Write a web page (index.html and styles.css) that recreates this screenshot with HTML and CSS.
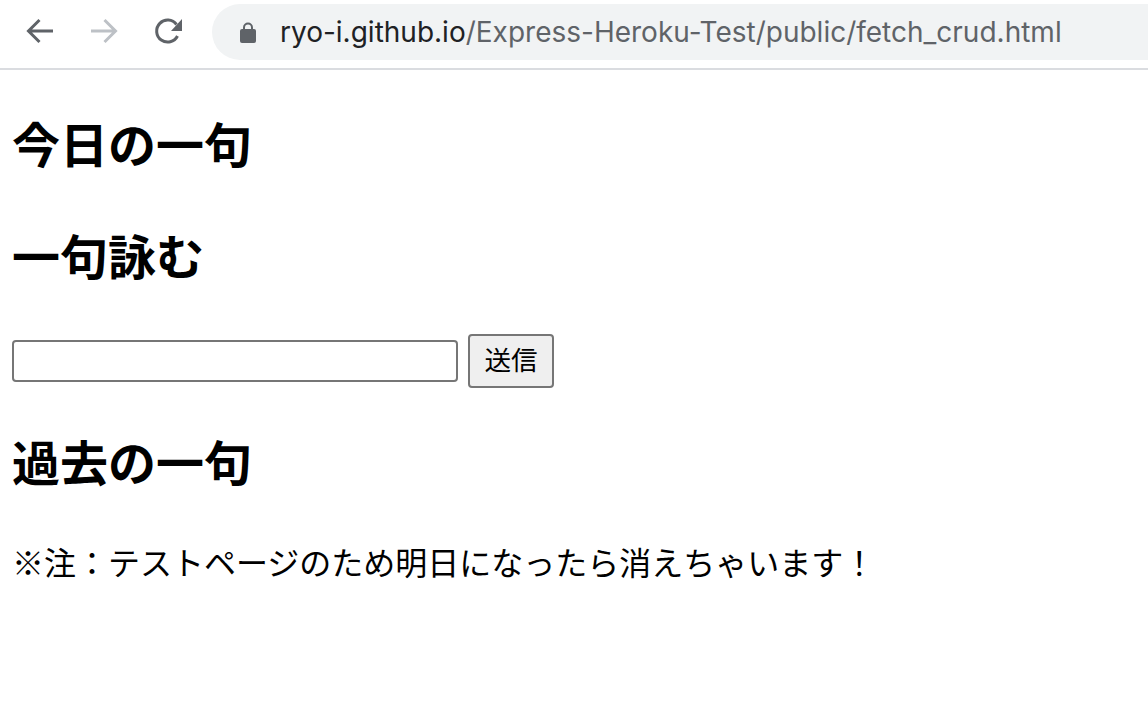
FILE: index.html
```html
<!DOCTYPE html>
<html lang="ja">
<head>
  <meta charset="utf-8">
  <title>fetch_crud</title>
  <link rel="stylesheet" href="styles.css">
</head>
<body>
  <div class="toolbar">
    <svg class="nav-icon" viewBox="0 0 32 32"><path d="M29 15H5M15.500 4 4.500 15 15.500 26" fill="none" stroke="#5f6368" stroke-width="3"/></svg>
    <svg class="nav-icon" viewBox="0 0 32 32"><path d="M3 15H27M16.500 4 27.500 15 16.500 26" fill="none" stroke="#bdc1c6" stroke-width="3"/></svg>
    <svg class="nav-icon" viewBox="0 0 32 32"><path d="M25.500 20A11 11 0 1 1 24.500 8.500" fill="none" stroke="#5f6368" stroke-width="3"/><path d="M30 3V15H19Z" fill="#5f6368"/></svg>
    <div class="omnibox">
      <svg class="lock" viewBox="0 0 16 22"><path d="M4 9V6.500a4 4 0 0 1 8 0V9" fill="none" stroke="#5f6368" stroke-width="2"/><rect x="0" y="8" width="16" height="14" rx="2" fill="#5f6368"/></svg>
      <span class="url"><span class="host">ryo-i.github.io</span>/Express-Heroku-Test/public/fetch_crud.html</span>
    </div>
  </div>

  <div class="content">
    <h2>今日の一句</h2>
    <h2>一句詠む</h2>
    <form class="haiku-form">
      <input type="text" class="haiku-input">
      <button type="button" class="send">送信</button>
    </form>
    <h2>過去の一句</h2>
    <p class="note">※注：テストページのため明日になったら消えちゃいます！</p>
  </div>
</body>
</html>
```

FILE: styles.css
```css
html, body {
  height: 100%;
}
body {
  margin: 0;
  background-color: #fff;
  color: #000;
  font-family: "Liberation Sans", "Noto Sans CJK JP", sans-serif;
  overflow: hidden;
}
.toolbar {
  display: flex;
  align-items: center;
  height: 68px;
  padding-left: 24px;
  border-bottom: 2px solid #dadce0;
  overflow: hidden;
}
.nav-icon {
  flex: none;
  width: 32px;
  height: 32px;
  margin-top: -4px;
  margin-right: 32px;
}
.nav-icon:nth-child(3) {
  margin-right: 28px;
}
.omnibox {
  flex: none;
  display: flex;
  align-items: center;
  width: 1000px;
  height: 56px;
  margin-top: -4px;
  padding-left: 28px;
  border-radius: 28px;
  background-color: #f1f3f4;
}
.lock {
  width: 16px;
  height: 22px;
  margin-right: 24px;
}
.url {
  font-family: Inter, "Liberation Sans", sans-serif;
  font-size: 28px;
  color: #5f6368;
  white-space: nowrap;
}
.host {
  color: #202124;
}
.content {
  padding: 49px 12px 0;
}
h2 {
  margin: 0 0 56px;
  font-size: 48px;
  line-height: 56px;
  font-weight: bold;
}
.haiku-form {
  display: flex;
  align-items: center;
  gap: 10px;
  margin: -9px 0 49px;
}
.haiku-input {
  box-sizing: border-box;
  width: 446px;
  height: 42px;
  margin: 0;
  padding: 0;
  border: 2px solid #767676;
  border-radius: 4px;
  background-color: #fff;
}
.send {
  box-sizing: border-box;
  width: 86px;
  height: 54px;
  margin: 0;
  padding: 0 0 6px;
  border: 2px solid #767676;
  border-radius: 4px;
  background-color: #efefef;
  color: #000;
  font-family: inherit;
  font-size: 26.600px;
}
.note {
  margin: -9px 0 0;
  font-size: 32px;
  line-height: 48px;
}
```
